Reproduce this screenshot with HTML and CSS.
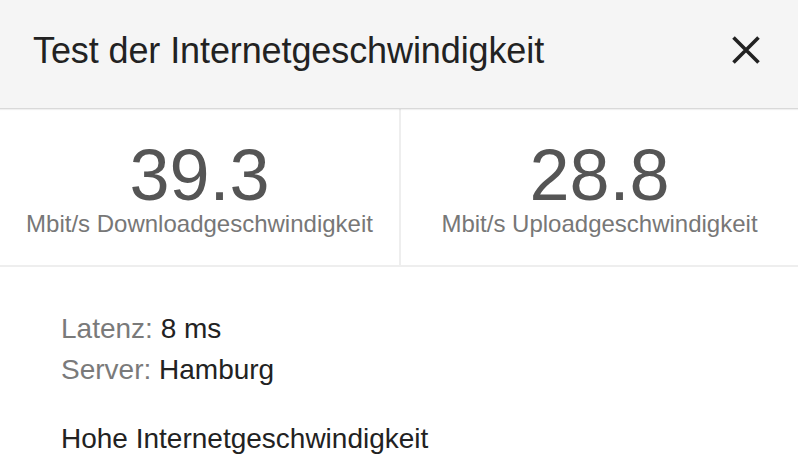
FILE: index.html
```html
<!DOCTYPE html>
<html lang="de">
<head>
<meta charset="utf-8">
<title>Test der Internetgeschwindigkeit</title>
<link rel="stylesheet" href="styles.css">
</head>
<body>
<div class="dialog">
  <header class="header">
    <h1 class="title">Test der Internetgeschwindigkeit</h1>
    <button class="close" aria-label="Schließen">
      <svg width="32" height="32" viewBox="0 0 32 32">
        <path d="M3.5 3.5 L28.5 28.5 M28.5 3.5 L3.5 28.5" stroke="#222" stroke-width="3.6" fill="none"/>
      </svg>
    </button>
  </header>
  <section class="stats">
    <div class="stat">
      <div class="value">39.3</div>
      <div class="unit">Mbit/s Downloadgeschwindigkeit</div>
    </div>
    <div class="stat stat-right">
      <div class="value">28.8</div>
      <div class="unit">Mbit/s Uploadgeschwindigkeit</div>
    </div>
  </section>
  <section class="details">
    <div class="row"><span class="key">Latenz:</span> 8 ms</div>
    <div class="row"><span class="key">Server:</span> Hamburg</div>
    <div class="row summary">Hohe Internetgeschwindigkeit</div>
  </section>
</div>
</body>
</html>
```
FILE: styles.css
```css
html, body {
  margin: 0;
  padding: 0;
  background: #ffffff;
}
body {
  font-family: "Liberation Sans", Arial, Helvetica, sans-serif;
  color: #222222;
}
.dialog {
  width: 798px;
}
.header {
  box-sizing: border-box;
  height: 109px;
  background: #f5f5f5;
  border-bottom: 1px solid #d9d9d9;
  box-shadow: 0 1px 1px rgba(0, 0, 0, 0.06);
  display: flex;
  align-items: flex-start;
  justify-content: space-between;
  padding: 30px 36px 0 33px;
  position: relative;
}
.title {
  margin: 0;
  font-size: 36px;
  line-height: 42px;
  font-weight: normal;
  color: #222222;
  letter-spacing: -0.1px;
}
.close {
  border: 0;
  padding: 0;
  margin-top: 4px;
  background: transparent;
  width: 32px;
  height: 32px;
  display: block;
}
.close svg {
  display: block;
}
.stats {
  display: grid;
  grid-template-columns: 399px 1fr;
  border-bottom: 2px solid #eeeeee;
}
.stat {
  text-align: center;
  padding: 31px 0 27px;
}
.stat-right {
  border-left: 2px solid #eeeeee;
}
.value {
  font-size: 72px;
  line-height: 70px;
  color: #555555;
}
.unit {
  font-size: 24px;
  line-height: 28px;
  color: #777777;
}
.details {
  padding: 41px 0 0 61px;
}
.row {
  font-size: 28px;
  line-height: 41px;
  color: #222222;
}
.key {
  color: #7a7a7a;
}
.summary {
  margin-top: 28px;
}
```
